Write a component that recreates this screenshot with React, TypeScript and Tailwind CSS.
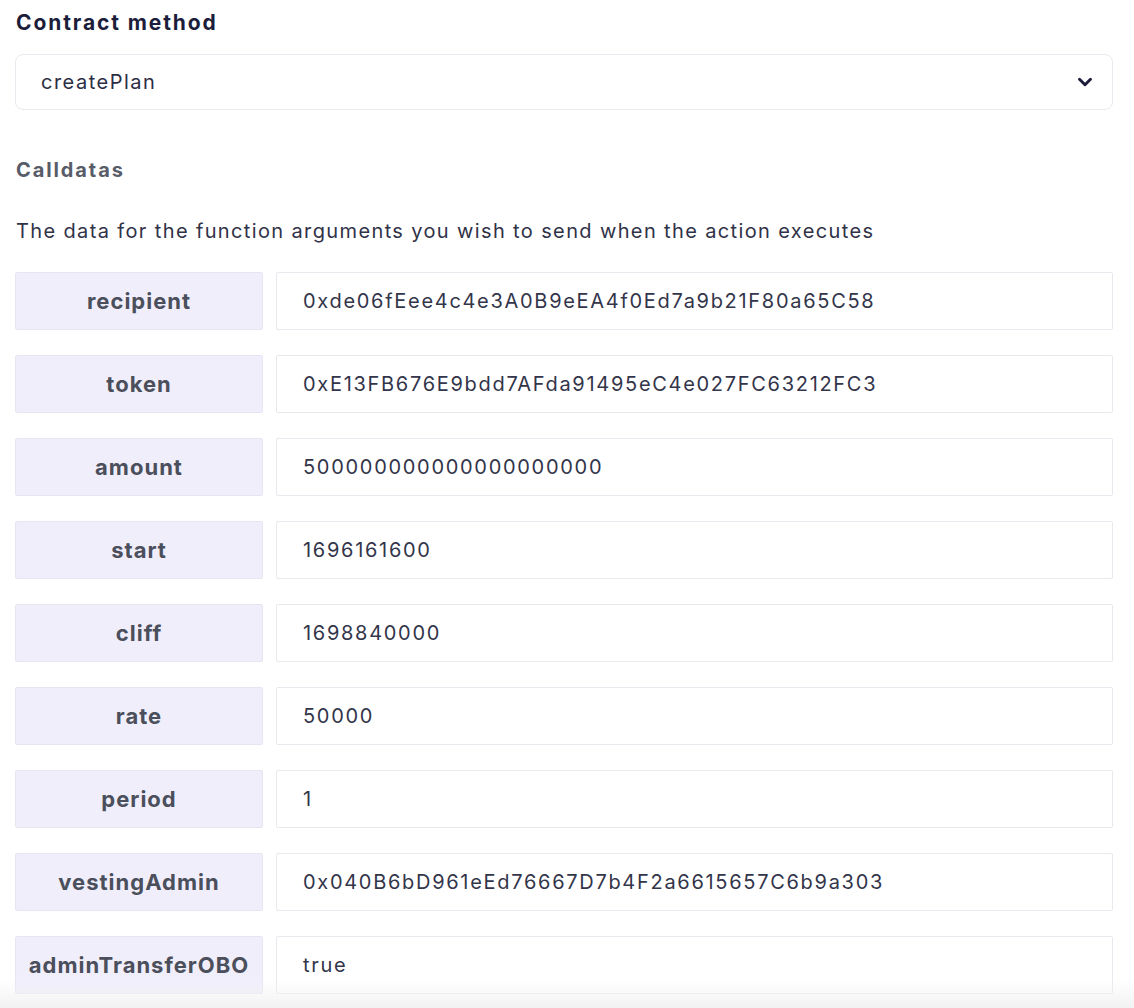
import React from 'react';

const calldatas: { name: string; value: string }[] = [
    { name: 'recipient', value: '0xde06fEee4c4e3A0B9eEA4f0Ed7a9b21F80a65C58' },
    { name: 'token', value: '0xE13FB676E9bdd7AFda91495eC4e027FC63212FC3' },
    { name: 'amount', value: '500000000000000000000' },
    { name: 'start', value: '1696161600' },
    { name: 'cliff', value: '1698840000' },
    { name: 'rate', value: '50000' },
    { name: 'period', value: '1' },
    { name: 'vestingAdmin', value: '0x040B6bD961eEd76667D7b4F2a6615657C6b9a303' },
    { name: 'adminTransferOBO', value: 'true' },
];

const App: React.FC = () => {
    return (
        <div className="relative min-h-[1008px] bg-white font-['Inter',sans-serif] overflow-hidden">
            <div className="ml-[15px] w-[1098px] pt-[10px]">
                <h2 className="text-[21px] font-bold text-[#1c1d3b] leading-[26px] ml-[1px] tracking-[1.9px]">Contract method</h2>

                {/* Method select */}
                <div className="mt-[18px] h-[56px] rounded-lg border border-[#e9e9f0] flex items-center justify-between pl-[25px] pr-[16px]">
                    <span className="text-[20px] text-[#2c2e45] tracking-[1.5px]">createPlan</span>
                    <svg width="22" height="22" viewBox="0 0 24 24" fill="none" stroke="#1c1d3b" strokeWidth="3.2" strokeLinecap="round" strokeLinejoin="round">
                        <path d="M6 9l6 6 6-6" />
                    </svg>
                </div>

                <h3 className="mt-[48px] text-[20px] font-bold text-[#585c68] leading-[24px] ml-[1px] tracking-[1.9px]">Calldatas</h3>
                <p className="mt-[36px] text-[20px] text-[#303248] leading-[26px] ml-[1px] tracking-[1.37px]">
                    The data for the function arguments you wish to send when the action executes
                </p>

                {/* Argument rows */}
                <div className="mt-[28px] flex flex-col gap-[25px]">
                    {calldatas.map((arg) => (
                        <div key={arg.name} className="flex gap-[13px] h-[58px]">
                            <div className="w-[248px] shrink-0 rounded-[2px] border border-[#e6e6f2] bg-[#f0eefb] flex items-center justify-center">
                                <span className="text-[22px] font-bold text-[#4b4f5c] tracking-[1px]">{arg.name}</span>
                            </div>
                            <div className="flex-1 rounded-[2px] border border-[#e8e8ee] bg-white flex items-center pl-[26px]">
                                <span className="text-[20px] text-[#33354a] tracking-[1.7px]">{arg.value}</span>
                            </div>
                        </div>
                    ))}
                </div>
            </div>

            {/* bottom fade */}
            <div className="absolute inset-x-0 bottom-0 h-[28px] bg-gradient-to-b from-white/0 to-[#f2f2f2] pointer-events-none"></div>
        </div>
    );
};

export default App;
